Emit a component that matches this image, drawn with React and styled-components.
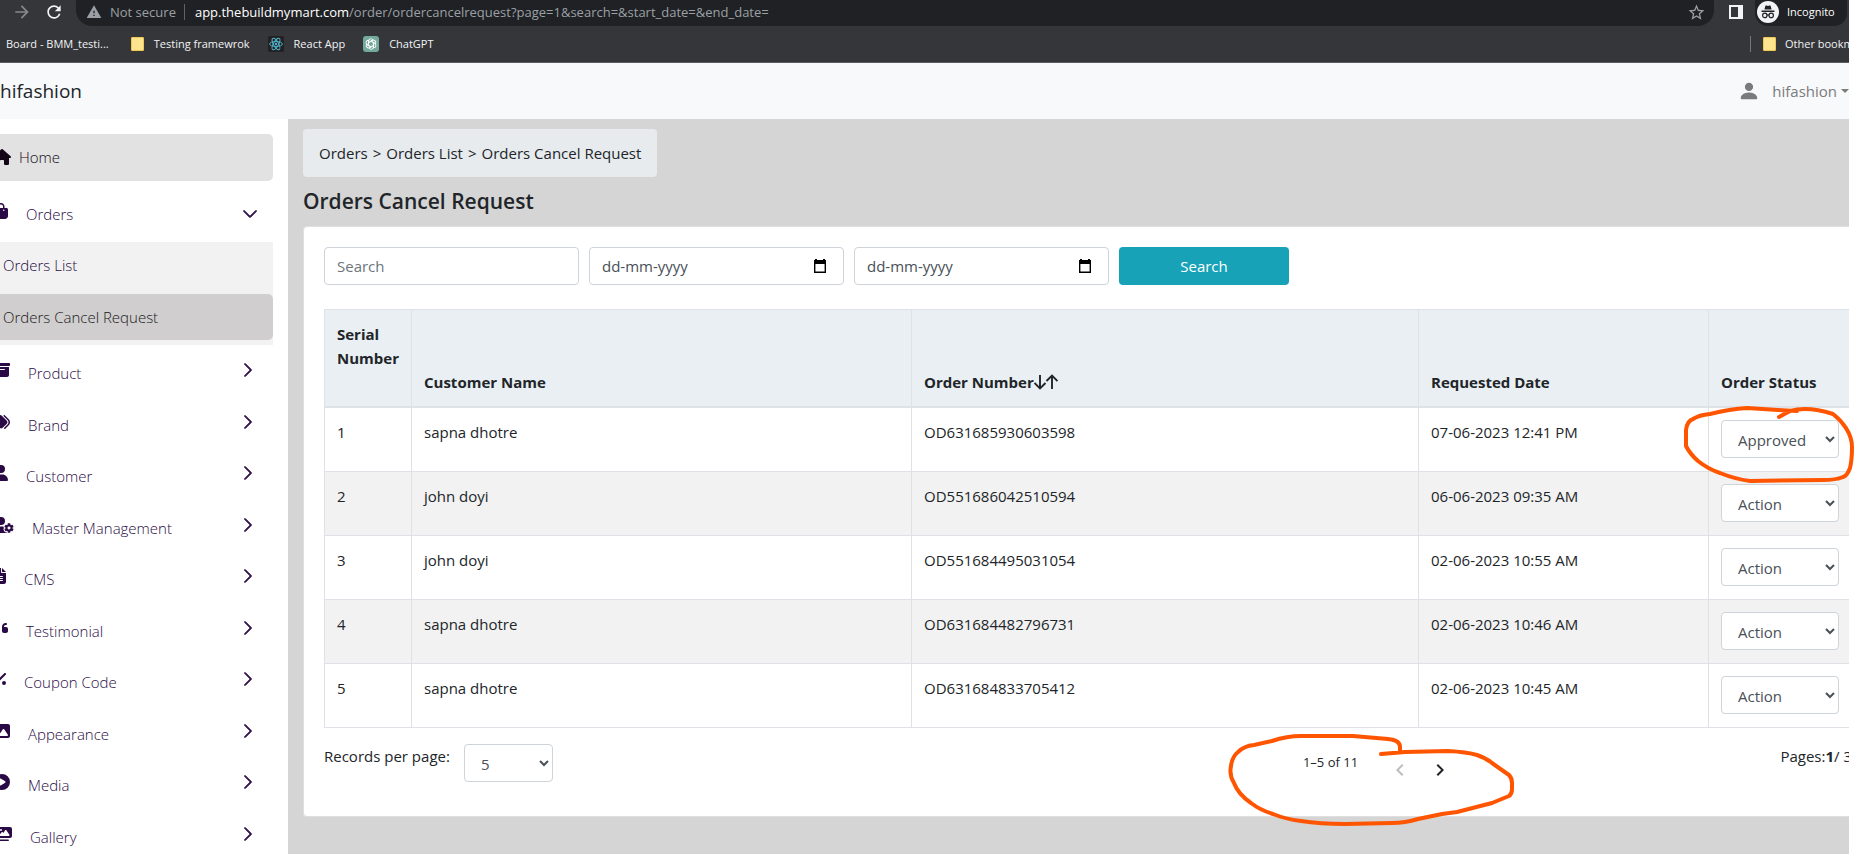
import React, { useState } from 'react';
import styled, { createGlobalStyle } from 'styled-components';
import {
    FaHouse,
    FaBagShopping,
    FaBoxArchive,
    FaTags,
    FaUser,
    FaUserGear,
    FaFileLines,
    FaQuoteLeft,
    FaPercent,
    FaImage,
    FaCirclePlay,
    FaImages,
} from 'react-icons/fa6';
import { BsChevronRight, BsChevronDown, BsPersonFill } from 'react-icons/bs';
import { MdArrowForward, MdRefresh, MdWarning, MdStarBorder, MdChevronLeft, MdChevronRight } from 'react-icons/md';

const GlobalStyle = createGlobalStyle`
    *, *::before, *::after {
        box-sizing: border-box;
    }

    body {
        margin: 0;
        font-family: 'Open Sans', 'Noto Sans', sans-serif;
        font-size: 15px;
        line-height: 24px;
        color: #212529;
        background: #fff;
    }

    a {
        color: inherit;
        text-decoration: none;
    }

    button, input, select {
        font: inherit;
    }
`;

const Screen = styled.div`
    position: relative;
    height: 100vh;
    padding-right: 5px;
    overflow: hidden;
`;

const Window = styled.div`
    display: flex;
    flex-direction: column;
    height: 100%;
    overflow: hidden;
`;

/* browser bar */

const Browser = styled.header`
    flex: none;
    background: #35363a;
    border-bottom: 1px solid #5d5e62;
    color: #f1f3f4;
    font-size: 11px;
    line-height: 16px;
    white-space: nowrap;
`;

const Toolbar = styled.div`
    display: flex;
    align-items: center;
    height: 26px;
    padding-left: 6px;
`;

const ToolButton = styled.button`
    display: flex;
    justify-content: center;
    width: 32px;
    padding: 0 0 2px;
    border: 0;
    background: none;
    color: ${props => props.$dim ? '#88898c' : '#f1f3f4'};
    font-size: 20px;
`;

const Omnibox = styled.div`
    display: flex;
    flex: 1;
    align-items: center;
    height: 26px;
    margin-left: 6px;
    padding: 0 8px 2px 10px;
    border-radius: 0 0 16px 16px;
    background: #202124;
    color: #9aa0a6;
    font-size: 13px;
`;

const NotSecure = styled.span`
    margin: 0 8px;
`;

const Url = styled.span`
    flex: 1;
    padding-left: 10px;
    border-left: 1px solid #5f6368;

    b {
        color: #fff;
        font-weight: 400;
    }
`;

const PanelIcon = styled.span`
    width: 14px;
    height: 14px;
    margin: 0 12px 2px 15px;
    border: 2px solid #f1f3f4;
    border-right-width: 5px;
`;

const Profile = styled.button`
    display: flex;
    align-items: center;
    gap: 8px;
    width: 92px;
    height: 26px;
    margin-right: 2px;
    padding: 0 0 2px 2px;
    border: 0;
    border-radius: 0 0 13px 13px;
    background: #202124;
    color: #fff;
    font-size: 11px;
`;

const Bookmarks = styled.nav`
    display: flex;
    align-items: center;
    height: 36px;
    padding-left: 6px;
`;

const Bookmark = styled.a`
    display: flex;
    align-items: center;
    gap: 10px;
    margin-right: ${props => props.$after || 18}px;
`;

const Folder = styled.span`
    flex: none;
    width: 13px;
    height: 14px;
    border: 1px solid #f0c94f;
    border-radius: 1px;
    background: #ffe48f;
`;

const OtherBookmarks = styled.a`
    display: flex;
    align-items: center;
    gap: 9px;
    width: 99px;
    height: 16px;
    margin-left: auto;
    padding-left: 12px;
    border-left: 1px solid #77787b;
    overflow: hidden;
`;

/* shop admin */

const Navbar = styled.header`
    display: flex;
    flex: none;
    align-items: center;
    justify-content: space-between;
    height: 56px;
    background: #f8f9fb;
`;

const Brand = styled.a`
    font-size: 19px;
`;

const Account = styled.button`
    display: flex;
    align-items: center;
    padding: 0;
    border: 0;
    background: none;
    color: #7b7b7b;

    svg {
        margin-right: 12px;
        font-size: 22px;
    }

    &::after {
        content: '';
        margin-left: 4px;
        border: 4px solid transparent;
        border-top-color: currentColor;
        border-bottom: 0;
    }
`;

const Body = styled.div`
    display: flex;
    flex: 1;
    min-height: 0;
`;

const Sidebar = styled.nav`
    flex: none;
    width: 288px;
    padding: 15px 15px 0 0;
    overflow: hidden;
    background: #fff;
    color: #2a0a45;
    font-weight: 300;
`;

const HomeLink = styled.a`
    display: flex;
    align-items: center;
    gap: 8px;
    height: 47px;
    margin-left: -7px;
    padding-bottom: 1px;
    border-radius: 5px;
    background: #e2e2e2;
    color: #120617;

    svg {
        width: 18px;
        height: 16px;
    }
`;

const Menu = styled.ul`
    margin: 0;
    padding: 0;
    list-style: none;
`;

const MenuItem = styled.li`
    height: 52px;

    &:nth-child(even) {
        height: 51px;
    }
`;

const MenuButton = styled.button`
    display: flex;
    align-items: center;
    width: 100%;
    height: ${props => props.$open ? 61 : 52}px;
    padding: ${props => props.$open ? '5px 15px 0 0' : '0 17px 0 0'};
    border: 0;
    background: none;
    color: inherit;
    font-weight: 300;

    svg {
        flex: none;
        width: ${props => props.$icon}px;
        height: 16px;
        margin-bottom: 6px;
        margin-left: -6px;
    }

    span {
        flex: 1;
        padding-left: 18px;
        text-align: left;
    }

    svg:last-child {
        width: 16px;
        margin-bottom: ${props => props.$open ? 0 : 6}px;
        stroke: currentColor;
        stroke-width: 1px;
    }
`;

const SubMenu = styled.div`
    margin-bottom: 2px;
    padding-bottom: 5px;
    background: #f2f2f2;
`;

const SubLink = styled.a`
    display: flex;
    align-items: center;
    height: 46px;
    margin-top: ${props => props.$active ? 6 : 0}px;
    padding: 0 3px;
    border-radius: 0 5px 5px 0;
    background: ${props => props.$active ? '#d0cece' : 'none'};
    color: ${props => props.$active ? '#1a1a1a' : 'inherit'};
`;

const Main = styled.main`
    flex: 1;
    min-width: 0;
    padding: 10px 0 0 15px;
    overflow: hidden;
    background: #d5d5d5;
`;

const Breadcrumb = styled.nav`
    display: flex;
    gap: 5px;
    width: max-content;
    padding: 12px 16px;
    border-radius: 4px;
    background: #e7ebee;
`;

const Title = styled.h1`
    margin: 11px 0;
    font-size: 21px;
    font-weight: 600;
    line-height: 27px;
`;

const Card = styled.section`
    height: 591px;
    margin-right: -24px;
    padding: 20px;
    border: 1px solid #dfdfdf;
    border-radius: 4px;
    background: #fff;
`;

const Filters = styled.form`
    display: grid;
    grid-template-columns: repeat(3, minmax(0, 255px)) 170px;
    gap: 10px;
    margin-bottom: 24px;
`;

const Field = styled.label`
    display: flex;
    align-items: center;
    height: 38px;
    padding: 0 16px 0 12px;
    border: 1px solid #ced4da;
    border-radius: 4px;
    background: #fff;
    color: #000;
`;

const FieldInput = styled.input`
    flex: 1;
    min-width: 0;
    padding: 0;
    border: 0;
    outline: 0;
    background: none;
    color: #495057;

    &::placeholder {
        color: ${props => props.$date ? '#495057' : '#6c757d'};
        opacity: 1;
    }
`;

const SearchButton = styled.button`
    border: 0;
    border-radius: 4px;
    background: #17a2b8;
    color: #fff;
`;

const Table = styled.table`
    width: 100%;
    table-layout: fixed;
    border-collapse: collapse;
`;

const Th = styled.th`
    width: ${props => props.$width ? `${props.$width}px` : 'auto'};
    height: 97px;
    padding: 12px;
    border: 1px solid #dee2e6;
    border-bottom-width: 2px;
    background: #e9eff2;
    font-weight: 700;
    text-align: left;
    vertical-align: ${props => props.$top ? 'top' : 'bottom'};

    svg {
        vertical-align: -2px;
    }
`;

const Tr = styled.tr`
    height: 64px;

    &:nth-child(even) {
        background: #f2f2f2;
    }
`;

const Td = styled.td`
    padding: 12px 12px 13px;
    border: 1px solid #dee2e6;
    vertical-align: top;
`;

const Select = styled.select`
    display: block;
    width: ${props => props.$width || '100%'};
    height: 38px;
    padding: 8px 12px 6px;
    border: 1px solid #ced4da;
    border-radius: 4px;
    background: #fff;
    color: #495057;
`;

const TableFooter = styled.div`
    display: grid;
    grid-template-columns: 2fr 1fr auto;
    padding-top: 16px;
`;

const PerPage = styled.label`
    display: flex;
    gap: 14px;
`;

const Pager = styled.div`
    display: flex;
    padding: 6px 8px;
    font-size: 13px;
`;

const PagerButton = styled.button`
    width: 24px;
    height: 24px;
    margin: 8px 0 0 ${props => props.$first ? 30 : 16}px;
    padding: 0;
    border: 0;
    background: none;
    color: #212529;
    font-size: 24px;
    line-height: 0;

    &:disabled {
        color: #bdbdbd;
    }
`;

const Scribble = styled.svg`
    position: absolute;
    top: ${props => props.$top}px;
    right: ${props => props.$right}px;
    fill: none;
    stroke: #ff5500;
    stroke-width: 4px;
    stroke-linecap: round;
    stroke-linejoin: round;
    pointer-events: none;
`;

const menu = [
    { name: 'Product', icon: FaBoxArchive, width: 16 },
    { name: 'Brand', icon: FaTags, width: 16 },
    { name: 'Customer', icon: FaUser, width: 14 },
    { name: 'Master Management', icon: FaUserGear, width: 20 },
    { name: 'CMS', icon: FaFileLines, width: 12 },
    { name: 'Testimonial', icon: FaQuoteLeft, width: 14 },
    { name: 'Coupon Code', icon: FaPercent, width: 12 },
    { name: 'Appearance', icon: FaImage, width: 16 },
    { name: 'Media', icon: FaCirclePlay, width: 16 },
    { name: 'Gallery', icon: FaImages, width: 18 },
];

const orders = [
    { customer: 'sapna dhotre', number: 'OD631685930603598', date: '07-06-2023 12:41 PM', status: 'Approved' },
    { customer: 'john doyi', number: 'OD551686042510594', date: '06-06-2023 09:35 AM', status: 'Action' },
    { customer: 'john doyi', number: 'OD551684495031054', date: '02-06-2023 10:55 AM', status: 'Action' },
    { customer: 'sapna dhotre', number: 'OD631684482796731', date: '02-06-2023 10:46 AM', status: 'Action' },
    { customer: 'sapna dhotre', number: 'OD631684833705412', date: '02-06-2023 10:45 AM', status: 'Action' },
];

function CalendarIcon() {
    return (
        <svg width="14" height="15" viewBox="0 0 14 15" aria-hidden="true">
            <path d="M2 0h2v1h6V0h2v1h1v13H1V1h1zM2.4 5v7.6h9.2V5z" fill="currentColor" fillRule="evenodd" />
        </svg>
    );
}

function SortIcon() {
    return (
        <svg width="24" height="16" viewBox="0 0 24 16" aria-hidden="true">
            <path
                d="M6 1v13.5M.5 9 6 14.5 11.5 9M18 15V1.500M12.500 7 18 1.500 23.500 7"
                fill="none"
                stroke="currentColor"
                strokeWidth="1.9"
            />
        </svg>
    );
}

function ReactIcon() {
    return (
        <svg width="16" height="16" viewBox="0 0 16 16" aria-hidden="true">
            <rect width="16" height="16" rx="1" fill="#222" />
            <g fill="none" stroke="#53b9d3" strokeWidth="0.9">
                <ellipse cx="8" cy="8" rx="6.4" ry="2.5" />
                <ellipse cx="8" cy="8" rx="6.4" ry="2.5" transform="rotate(60 8 8)" />
                <ellipse cx="8" cy="8" rx="6.4" ry="2.5" transform="rotate(120 8 8)" />
            </g>
            <circle cx="8" cy="8" r="1.2" fill="#53b9d3" />
        </svg>
    );
}

function ChatIcon() {
    return (
        <svg width="16" height="16" viewBox="0 0 16 16" aria-hidden="true">
            <rect width="16" height="16" rx="3" fill="#74aa9c" />
            <g fill="none" stroke="#fff" strokeWidth="0.9">
                {[0, 60, 120, 180, 240, 300].map(angle => (
                    <path key={angle} d="M5.6 9.4V5a2.3 2.3 0 0 1 4.3-1.1L6.6 5.8" transform={`rotate(${angle} 8 8)`} />
                ))}
            </g>
        </svg>
    );
}

function IncognitoIcon() {
    return (
        <svg width="22" height="22" viewBox="0 0 22 22" aria-hidden="true">
            <circle cx="11" cy="11" r="11" fill="#f1f3f4" />
            <path d="M7.4 8.6 8.5 4.4h1.3l1.2.5 1.2-.5h1.3l1.1 4.2zM4.5 9.6h13v1.3h-13z" fill="#202124" />
            <g fill="none" stroke="#202124" strokeWidth="1.2">
                <circle cx="7.8" cy="14.4" r="2.2" />
                <circle cx="14.2" cy="14.4" r="2.2" />
                <path d="M10 14.2q1-.7 2 0" />
            </g>
        </svg>
    );
}

function BrowserBar() {
    return (
        <Browser>
            <Toolbar>
                <ToolButton $dim aria-label="Forward"><MdArrowForward /></ToolButton>
                <ToolButton aria-label="Reload"><MdRefresh /></ToolButton>
                <Omnibox>
                    <MdWarning size={16} />
                    <NotSecure>Not secure</NotSecure>
                    <Url><b>app.thebuildmymart.com</b>/order/ordercancelrequest?page=1&amp;search=&amp;start_date=&amp;end_date=</Url>
                    <MdStarBorder size={19} />
                </Omnibox>
                <PanelIcon />
                <Profile><IncognitoIcon />Incognito</Profile>
            </Toolbar>
            <Bookmarks>
                <Bookmark href="#" $after={22}>Board - BMM_testi...</Bookmark>
                <Bookmark href="#"><Folder />Testing framewrok</Bookmark>
                <Bookmark href="#"><ReactIcon />React App</Bookmark>
                <Bookmark href="#"><ChatIcon />ChatGPT</Bookmark>
                <OtherBookmarks href="#"><Folder />Other bookmarks</OtherBookmarks>
            </Bookmarks>
        </Browser>
    );
}

function SideMenu() {
    return (
        <Sidebar>
            <HomeLink href="#"><FaHouse />Home</HomeLink>
            <MenuButton $open $icon={14}>
                <FaBagShopping />
                <span>Orders</span>
                <BsChevronDown />
            </MenuButton>
            <SubMenu>
                <SubLink href="#">Orders List</SubLink>
                <SubLink href="#" $active>Orders Cancel Request</SubLink>
            </SubMenu>
            <Menu>
                {menu.map(({ name, icon: Icon, width }) => (
                    <MenuItem key={name}>
                        <MenuButton $icon={width}>
                            <Icon />
                            <span>{name}</span>
                            <BsChevronRight />
                        </MenuButton>
                    </MenuItem>
                ))}
            </Menu>
        </Sidebar>
    );
}

function OrdersTable() {
    const [statuses, setStatuses] = useState(orders.map(order => order.status));

    const changeStatus = (index, value) => {
        setStatuses(statuses.map((status, i) => (i === index ? value : status)));
    };

    return (
        <Table>
            <thead>
                <tr>
                    <Th $width={87} $top>Serial Number</Th>
                    <Th $width={500}>Customer Name</Th>
                    <Th>Order Number<SortIcon /></Th>
                    <Th $width={290}>Requested Date</Th>
                    <Th $width={143}>Order Status</Th>
                </tr>
            </thead>
            <tbody>
                {orders.map((order, index) => (
                    <Tr key={order.number}>
                        <Td>{index + 1}</Td>
                        <Td>{order.customer}</Td>
                        <Td>{order.number}</Td>
                        <Td>{order.date}</Td>
                        <Td>
                            <Select
                                aria-label={`Status of ${order.number}`}
                                value={statuses[index]}
                                onChange={e => changeStatus(index, e.target.value)}
                            >
                                <option>Action</option>
                                <option>Approved</option>
                            </Select>
                        </Td>
                    </Tr>
                ))}
            </tbody>
        </Table>
    );
}

export default function App() {
    return (
        <Screen>
            <GlobalStyle />
            <Window>
                <BrowserBar />
                <Navbar>
                    <Brand href="#">hifashion</Brand>
                    <Account><BsPersonFill />hifashion</Account>
                </Navbar>
                <Body>
                    <SideMenu />
                    <Main>
                        <Breadcrumb>
                            <a href="#">Orders</a>
                            <span>&gt;</span>
                            <a href="#">Orders List</a>
                            <span>&gt;</span>
                            <a href="#">Orders Cancel Request</a>
                        </Breadcrumb>
                        <Title>Orders Cancel Request</Title>
                        <Card>
                            <Filters onSubmit={e => e.preventDefault()}>
                                <Field><FieldInput placeholder="Search" aria-label="Search" /></Field>
                                <Field><FieldInput $date placeholder="dd-mm-yyyy" aria-label="Start date" /><CalendarIcon /></Field>
                                <Field><FieldInput $date placeholder="dd-mm-yyyy" aria-label="End date" /><CalendarIcon /></Field>
                                <SearchButton>Search</SearchButton>
                            </Filters>
                            <OrdersTable />
                            <TableFooter>
                                <PerPage>
                                    Records per page:
                                    <Select $width="89px" defaultValue="5">
                                        <option>5</option>
                                        <option>10</option>
                                    </Select>
                                </PerPage>
                                <Pager>
                                    1–5 of 11
                                    <PagerButton $first disabled aria-label="Previous page"><MdChevronLeft /></PagerButton>
                                    <PagerButton aria-label="Next page"><MdChevronRight /></PagerButton>
                                </Pager>
                                <span>Pages:<b>1</b>/ 3</span>
                            </TableFooter>
                        </Card>
                    </Main>
                </Body>
            </Window>
            <Scribble $top={400} $right={0} width="174" height="90" viewBox="0 0 174 90">
                <path d="M99 17 110 11Q128 6 153 14C162 21 172 33 172 47Q172 60 170 68 167 76 163 77 156 80 143 80L70 81Q55 79 40 73 28 69 18 61 10 54 6 46V30Q7 21 13 19 19 15 30 14 50 9 67 8L98 10 117 11" />
            </Scribble>
            <Scribble $top={720} $right={334} width="300" height="110" viewBox="0 0 300 110">
                <path d="M161 34 185 32 228 31Q247 32 257 35 266 38 272 43L289 55Q292 58 292 63V69Q292 74 289 76L272 83 237 92 222 94 198 99Q185 103 172 103L125 104Q100 104 81 101 65 99 53 94 40 90 31 83 18 74 14 63 9 55 11 46 12 37 18 32 24 26 34 25L52 21Q67 16 81 16H133L168 19Q180 20 180 27V32" />
            </Scribble>
        </Screen>
    );
}
